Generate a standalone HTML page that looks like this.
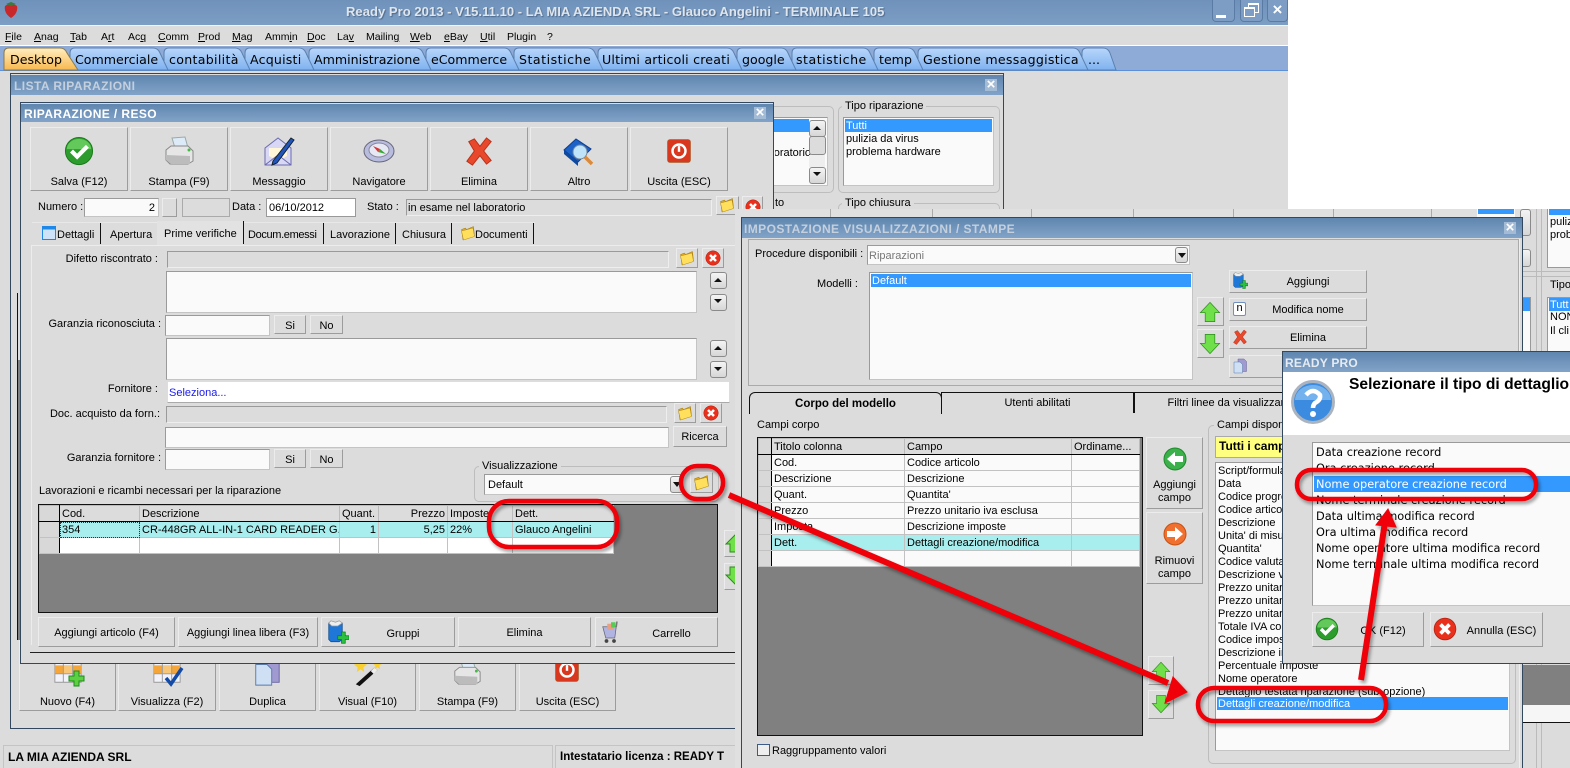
<!DOCTYPE html>
<html><head><meta charset="utf-8"><title>Ready Pro</title>
<style>
html,body{margin:0;padding:0;background:#fff}
body{width:1570px;height:768px;overflow:hidden;position:relative;font:11px/16px "Liberation Sans",sans-serif;color:#000}
div{position:absolute;box-sizing:border-box;white-space:nowrap}
svg{position:absolute;overflow:visible}
.tb{background:linear-gradient(#5f86af,#82a3c8)}
.btn{background:#dcdcdc;border:1px solid;border-color:#ececec #9c9c9c #9c9c9c #ececec;text-align:center}
.big .l{left:0;right:0;bottom:0;text-align:center}
.in{background:#fafafa;border:1px solid #9a9a9a;border-bottom-color:#c4c4c4;border-right-color:#c4c4c4;padding:1px 3px}
.ro{background:#dcdcdc;border:1px solid #9a9a9a;border-bottom-color:#eee;border-right-color:#eee;padding:0 3px}
.v{font-family:"DejaVu Sans",sans-serif}
.sel{background:#3399ff;color:#fff;line-height:15px}
.gb{border:1px solid #bdbdbd;border-radius:5px}
.cap{background:#dcdcdc;padding:0 3px}
.r{text-align:right}
.x{width:12px;height:12px;background:#a4bbd6;color:#fff;font:bold 15px/11px 'Liberation Sans',sans-serif;text-align:center}
.tl{top:52px;font-size:12.6px}
.wb{top:0;height:22px;border:1px solid #5a7ca4;border-top:none;border-radius:0 0 4px 4px;background:#7d9dc4}
table{position:absolute;border-collapse:collapse;table-layout:fixed;background:#fff;font:11px/14px "Liberation Sans",sans-serif}
td,th{border:1px solid #c2c2c2;height:16px;padding:0 2px;font-weight:normal;text-align:left;overflow:hidden;white-space:nowrap;box-sizing:border-box}
th{background:#dcdcdc;border-color:#bbb;border-bottom:1px solid #000}
td.h,th.h{background:#d8d8d8;border-right:1px solid #000}
.cy td{background:#a8eeee}
.cy td.h{background:#d8d8d8}
.s{width:17px;background:linear-gradient(#f4f4f4,#d6d6d6);border:1px solid #8a8a8a;border-radius:3px}
.lst div{line-height:15px;height:13px}
</style></head>
<body>
<svg width="0" height="0" style="position:absolute">
<defs>
<symbol id="ok" viewBox="0 0 32 32"><circle cx="16" cy="16" r="14.5" fill="#2c9c2c" stroke="#1a7a1a"/><path d="M3 14a13 11 0 0 1 26 0z" fill="#63c95a"/><path d="M8 16l6 6 11-11" fill="none" stroke="#fff" stroke-width="4.5"/></symbol>
<symbol id="no" viewBox="0 0 32 32"><circle cx="16" cy="16" r="14.5" fill="#e8301c" stroke="#b02010"/><path d="M10 10l12 12M22 10L10 22" stroke="#fff" stroke-width="5"/></symbol>
<symbol id="x" viewBox="0 0 32 32"><path d="M5 6l6-3 6 8 7-9 5 4-8 10 8 10-5 4-7-9-8 10-6-4 8-11z" fill="#e8482c" stroke="#b93018"/></symbol>
<symbol id="prn" viewBox="0 0 32 32"><path d="M9 3l13-1 3 11H12z" fill="#dcebf7" stroke="#9aa"/><path d="M3 15l5-4h17l5 5v10l-5 3H7l-4-4z" fill="#e6e6e6" stroke="#888"/><path d="M3 20l24 1v8H8l-5-4z" fill="#bcbcbc"/><circle cx="26" cy="15" r="1.5" fill="#4b4"/></symbol>
<symbol id="mail" viewBox="0 0 32 32"><path d="M2 13L15 3l13 10v17H2z" fill="#d8d8f4" stroke="#6a6ab0"/><path d="M6 13h18v8l-9 5-9-5z" fill="#fff7d8"/><path d="M2 30l13-10 13 10" fill="none" stroke="#6a6ab0"/><path d="M10 26L28 3l3 2-17 23-5 2z" fill="#2255bb" stroke="#123"/></symbol>
<symbol id="cmp" viewBox="0 0 32 32"><ellipse cx="16" cy="16" rx="15" ry="11" fill="#b8bde0" stroke="#667"/><ellipse cx="16" cy="15" rx="10" ry="7" fill="#e6e8f4" stroke="#889"/><path d="M10 11l7 3-2 3z" fill="#d33"/><path d="M23 19l-8-2 2-3z" fill="#3a3"/></symbol>
<symbol id="bk" viewBox="0 0 32 32"><path d="M1 13L13 2l15 10-13 13z" fill="#1c62c8" stroke="#0d3e90"/><path d="M1 13v4l14 12v-4z" fill="#0d4aa0"/><circle cx="17" cy="15" r="7" fill="#bfe3f8" stroke="#789"/><path d="M22 20l7 7" stroke="#d98a3a" stroke-width="3.5"/></symbol>
<symbol id="pw" viewBox="0 0 32 32"><rect x="2" y="2" width="28" height="28" rx="3" fill="#d9381e" stroke="#a52"/><circle cx="16" cy="16" r="8" fill="none" stroke="#fff" stroke-width="3"/><path d="M16 10v7" stroke="#fff" stroke-width="3"/></symbol>
<symbol id="fo" viewBox="0 0 32 32"><path d="M3 9l8-3 2 3 14-6 2 19-23 8z" fill="#e0a820" stroke="#a17a10"/><path d="M3 12l23-6 3 17-22 7z" fill="#ffdf5c" stroke="#b08a18"/></symbol>
<symbol id="up" viewBox="0 0 32 32"><path d="M16 2L30 17h-7v13H9V17H2z" fill="#6fe04a" stroke="#2c8a1c"/></symbol>
<symbol id="dn" viewBox="0 0 32 32"><path d="M16 30L30 15h-7V2H9v13H2z" fill="#6fe04a" stroke="#2c8a1c"/></symbol>
<symbol id="q" viewBox="0 0 44 44"><circle cx="22" cy="22" r="20.5" fill="#3b8ce0" stroke="#aab4c0" stroke-width="3"/><path d="M4 20a18 15 0 0 1 36 0z" fill="#74b2ee"/><path d="M15 15q7-8 14 0 1 5-5 8-2 2-2 5" fill="none" stroke="#fff" stroke-width="4.5"/><circle cx="22" cy="34" r="3" fill="#fff"/></symbol>
<symbol id="grp" viewBox="0 0 32 32"><path d="M5 4h18v22l-4 3H8l-3-3z" fill="#1f78d8" stroke="#0a4a90"/><path d="M5 4l3-3 6 2 5-2 4 3-6 4H9z" fill="#eee" stroke="#999"/><path d="M17 21h5v-5h5v5h5v5h-5v5h-5v-5h-5z" fill="#2cc040" stroke="#0a7a20"/></symbol>
<symbol id="crt" viewBox="0 0 32 32"><path d="M5 9h18l-2 15H9z" fill="#b0b4e0" stroke="#667"/><path d="M11 5h9v8h-9z" fill="#e8a080"/><path d="M16 3h6v7h-6z" fill="#5c5"/><path d="M24 2l-1 7" stroke="#777" stroke-width="2"/><circle cx="10" cy="28" r="2.5" fill="#444"/><circle cx="20" cy="28" r="2.5" fill="#444"/></symbol>
<symbol id="tg" viewBox="0 0 32 32"><path d="M2 4h28v24H2z" fill="#f2f2fa" stroke="#999"/><path d="M2 10h28v9H2z" fill="#f4a63a"/><path d="M11 10h10v9H11z" fill="#f8c678"/><path d="M11 4v24M21 4v24M2 19h28" stroke="#999"/></symbol>
<symbol id="doc" viewBox="0 0 32 32"><path d="M12 2h12l5 5v20H12z" fill="#a09ad0" stroke="#64649c"/><path d="M4 8h12l5 5v17H4z" fill="#cfe0f4" stroke="#5a7aa8"/></symbol>
<symbol id="wand" viewBox="0 0 32 32"><path d="M3 29L23 11l3 3L7 31z" fill="#111"/><path d="M19 15l4-4 3 3-4 4z" fill="#eee"/><path d="M8 2l2 5 5 1-4 3 1 5-4-3-4 3 1-5-4-3 5-1z" fill="#f8d030"/><path d="M26 2l1 4 4 1-3 2 1 4-3-2-3 2 1-4-3-2 4-1z" fill="#f8d030"/></symbol>
</defs></svg>

<!-- main app -->
<div style="left:0;top:0;width:1288px;height:768px;background:#dcdcdc"></div>
<div style="left:0;top:0;width:1288px;height:25px;background:linear-gradient(#6f92ba,#7c9ec5)"></div>
<svg style="left:3px;top:1px" width="16" height="18" viewBox="0 0 16 18"><path d="M8 17C3 14 1 9 2 5q6-4 12 0c1 4-1 9-6 12z" fill="#c8282c"/><path d="M3 3l5-2 5 2-5 2z" fill="#3c7a3c"/></svg>
<div style="left:346px;top:4px;font-weight:bold;font-size:13px;color:#dfe5ec;letter-spacing:.045px;text-shadow:1px 1px 1px #4f6b8c">Ready Pro 2013 - V15.11.10 - LA MIA AZIENDA SRL - Glauco Angelini - TERMINALE 105</div>
<div class="wb" style="left:1212px;width:23px"><div style="left:3px;top:15px;width:10px;height:3px;background:#fff"></div></div>
<div class="wb" style="left:1240px;width:23px"><div style="left:7px;top:3px;width:11px;height:10px;border:1px solid #fff;border-top-width:2px"></div><div style="left:3px;top:7px;width:11px;height:10px;border:1px solid #fff;border-top-width:2px;background:#7d9dc4"></div></div>
<div class="wb" style="left:1267px;width:21px;color:#fff;text-align:center;font:bold 17px/20px 'Liberation Sans',sans-serif">×</div>

<!-- menu -->
<div style="left:0;top:25px;width:1288px;height:21px;background:#dcdcdc;border-top:1px solid #f4f4f4"></div>
<div style="left:5px;top:29px;font-size:10.5px"><u>F</u>ile</div>
<div style="left:34px;top:29px;font-size:10.5px"><u>A</u>nag</div>
<div style="left:70px;top:29px;font-size:10.5px"><u>T</u>ab</div>
<div style="left:101px;top:29px;font-size:10.5px">A<u>r</u>t</div>
<div style="left:128px;top:29px;font-size:10.5px">Ac<u>q</u></div>
<div style="left:158px;top:29px;font-size:10.5px"><u>C</u>omm</div>
<div style="left:198px;top:29px;font-size:10.5px"><u>P</u>rod</div>
<div style="left:232px;top:29px;font-size:10.5px"><u>M</u>ag</div>
<div style="left:265px;top:29px;font-size:10.5px">Amm<u>i</u>n</div>
<div style="left:307px;top:29px;font-size:10.5px"><u>D</u>oc</div>
<div style="left:337px;top:29px;font-size:10.5px">La<u>v</u></div>
<div style="left:366px;top:29px;font-size:10.5px">Mailin<u>g</u></div>
<div style="left:410px;top:29px;font-size:10.5px"><u>W</u>eb</div>
<div style="left:444px;top:29px;font-size:10.5px"><u>e</u>Bay</div>
<div style="left:480px;top:29px;font-size:10.5px"><u>U</u>til</div>
<div style="left:507px;top:29px;font-size:10.5px">Plugin</div>
<div style="left:547px;top:29px;font-size:10.5px">?</div>

<!-- tabs -->
<div style="left:0;top:45px;width:1288px;height:26px;background:#8dabd6;border-top:1px solid #fff;border-bottom:1px solid #5b8fd8"></div>
<svg style="left:0;top:0" width="1288" height="72">
<defs><linearGradient id="tbb" x1="0" y1="0" x2="0" y2="1"><stop offset="0" stop-color="#b8d6fa"/><stop offset="1" stop-color="#7fb2f0"/></linearGradient>
<linearGradient id="tbo" x1="0" y1="0" x2="0" y2="1"><stop offset="0" stop-color="#ffeec0"/><stop offset="1" stop-color="#f8b850"/></linearGradient></defs>
<g fill="url(#tbb)" stroke="#5c80ae">
<path d="M1082 70V53q0-5 5-5h16q5 0 7 5l6 17z"/>
<path d="M918 70V53q0-5 5-5h150q5 0 7 5l8 17z"/>
<path d="M874 70V53q0-5 5-5h29q5 0 7 5l8 17z"/>
<path d="M792 70V53q0-5 5-5h66q5 0 7 5l8 17z"/>
<path d="M737 70V53q0-5 5-5h39q5 0 7 5l8 17z"/>
<path d="M598 70V53q0-5 5-5h124q5 0 7 5l8 17z"/>
<path d="M514 70V53q0-5 5-5h69q5 0 7 5l8 17z"/>
<path d="M426 70V53q0-5 5-5h73q5 0 7 5l8 17z"/>
<path d="M309 70V53q0-5 5-5h102q5 0 7 5l8 17z"/>
<path d="M245 70V53q0-5 5-5h49q5 0 7 5l8 17z"/>
<path d="M164 70V53q0-5 5-5h66q5 0 7 5l8 17z"/>
<path d="M70 70V53q0-5 5-5h78q5 0 7 5l8 17z"/>
</g>
<path d="M4 70V53q0-5 5-5h51q5 0 7 5l11 17z" fill="url(#tbo)" stroke="#8a7a50"/>
</svg>
<div class="v tl" style="left:10px">Desktop</div>
<div class="v tl" style="left:75px">Commerciale</div>
<div class="v tl" style="left:169px;letter-spacing:.3px">contabilità</div>
<div class="v tl" style="left:250px;letter-spacing:.2px">Acquisti</div>
<div class="v tl" style="left:314px">Amministrazione</div>
<div class="v tl" style="left:431px">eCommerce</div>
<div class="v tl" style="left:519px;letter-spacing:.5px">Statistiche</div>
<div class="v tl" style="left:602px;letter-spacing:.2px">Ultimi articoli creati</div>
<div class="v tl" style="left:742px">google</div>
<div class="v tl" style="left:796px;letter-spacing:.5px">statistiche</div>
<div class="v tl" style="left:879px">temp</div>
<div class="v tl" style="left:923px;letter-spacing:.27px">Gestione messaggistica</div>
<div class="v tl" style="left:1088px">...</div>

<!-- LISTA window -->
<div style="left:10px;top:73px;width:994px;height:656px;background:#dcdcdc;border:1px solid #33475f"></div>
<div class="tb" style="left:11px;top:75px;width:992px;height:20px"></div>
<div style="left:14px;top:78px;font-weight:bold;font-size:12px;color:#c4d0de;letter-spacing:.45px">LISTA RIPARAZIONI</div>
<div class="x" style="left:985px;top:79px">×</div>
<div style="left:17px;top:293px;width:4px;height:347px;border-left:1px solid #111;background:linear-gradient(#dcdcdc 67px,#808080 67px)"></div>

<!-- lista groups -->
<div class="gb" style="left:770px;top:106px;width:64px;height:87px"></div>
<div class="in" style="left:770px;top:117px;width:58px;height:69px"></div>
<div class="sel" style="left:770px;top:119px;width:39px;height:13px"></div>
<div style="left:775px;top:145px;width:36px;overflow:hidden;height:16px;direction:rtl">oratorio</div>
<div class="s" style="left:809px;top:120px;height:17px"></div>
<div class="s" style="left:809px;top:136px;height:19px;background:#dcdcdc"></div>
<div style="left:809px;top:155px;width:16px;height:12px;background:#eee"></div>
<div class="s" style="left:809px;top:167px;height:17px"></div>
<svg style="left:813px;top:125px" width="8" height="55"><path d="M0 5l4-4 4 4zM0 47l4 4 4-4z" fill="#111"/></svg>
<div class="gb" style="left:838px;top:106px;width:162px;height:87px"></div>
<div class="cap" style="left:842px;top:98px">Tipo riparazione</div>
<div class="in" style="left:843px;top:117px;width:151px;height:69px"></div>
<div class="sel" style="left:845px;top:119px;width:147px;height:13px;padding-left:1px">Tutti</div>
<div style="left:846px;top:131px">pulizia da virus</div>
<div style="left:846px;top:144px">problema hardware</div>
<div style="left:775px;top:195px">to</div>
<div class="gb" style="left:838px;top:203px;width:162px;height:30px"></div>
<div class="cap" style="left:842px;top:195px">Tipo chiusura</div>

<!-- lista toolbar -->
<div class="btn big" style="left:19px;top:640px;width:97px;height:71px"><div class="l">Nuovo (F4)</div></div>
<div class="btn big" style="left:118px;top:640px;width:98px;height:71px"><div class="l">Visualizza (F2)</div></div>
<div class="btn big" style="left:219px;top:640px;width:97px;height:71px"><div class="l">Duplica</div></div>
<div class="btn big" style="left:319px;top:640px;width:97px;height:71px"><div class="l">Visual (F10)</div></div>
<div class="btn big" style="left:419px;top:640px;width:97px;height:71px"><div class="l">Stampa (F9)</div></div>
<div class="btn big" style="left:519px;top:640px;width:97px;height:71px"><div class="l">Uscita (ESC)</div></div>
<svg width="30" height="30" style="left:53px;top:656px"><use href="#tg"/><path d="M16 20h5v-5h5v5h5v5h-5v5h-5v-5h-5z" fill="#5cd040" stroke="#1e8a20"/></svg>
<svg width="30" height="30" style="left:152px;top:656px"><use href="#tg"/><path d="M14 22l5 6 11-16" fill="none" stroke="#124aa8" stroke-width="3.5"/></svg>
<svg width="30" height="30" style="left:252px;top:657px"><use href="#doc"/></svg>
<svg width="30" height="30" style="left:353px;top:657px"><use href="#wand"/></svg>
<svg width="30" height="30" style="left:452px;top:657px"><use href="#prn"/></svg>
<svg width="26" height="26" style="left:554px;top:657px"><use href="#pw"/></svg>

<!-- RIPARAZIONE window -->
<div style="left:20px;top:102px;width:754px;height:562px;background:#dcdcdc;border:1px solid #33475f"></div>
<div class="tb" style="left:21px;top:104px;width:752px;height:18px"></div>
<div style="left:24px;top:106px;font-weight:bold;font-size:12px;color:#fff;letter-spacing:.4px">RIPARAZIONE / RESO</div>
<div class="x" style="left:754px;top:107px">×</div>

<div class="btn big" style="left:30px;top:127px;width:98px;height:64px"><div class="l">Salva (F12)</div></div>
<div class="btn big" style="left:130px;top:127px;width:98px;height:64px"><div class="l">Stampa (F9)</div></div>
<div class="btn big" style="left:230px;top:127px;width:98px;height:64px"><div class="l">Messaggio</div></div>
<div class="btn big" style="left:330px;top:127px;width:98px;height:64px"><div class="l">Navigatore</div></div>
<div class="btn big" style="left:430px;top:127px;width:98px;height:64px"><div class="l">Elimina</div></div>
<div class="btn big" style="left:530px;top:127px;width:98px;height:64px"><div class="l">Altro</div></div>
<div class="btn big" style="left:630px;top:127px;width:98px;height:64px"><div class="l">Uscita (ESC)</div></div>
<svg width="30" height="30" style="left:64px;top:136px"><use href="#ok"/></svg>
<svg width="32" height="32" style="left:163px;top:135px"><use href="#prn"/></svg>
<svg width="32" height="32" style="left:263px;top:135px"><use href="#mail"/></svg>
<svg width="32" height="32" style="left:363px;top:135px"><use href="#cmp"/></svg>
<svg width="30" height="30" style="left:464px;top:136px"><use href="#x"/></svg>
<svg width="32" height="32" style="left:563px;top:137px"><use href="#bk"/></svg>
<svg width="26" height="26" style="left:666px;top:138px"><use href="#pw"/></svg>

<div style="left:38px;top:199px">Numero :</div>
<div class="in r" style="left:84px;top:198px;width:75px;height:19px">2</div>
<div class="btn" style="left:162px;top:198px;width:15px;height:19px"></div>
<div class="ro" style="left:182px;top:198px;width:48px;height:19px;border-color:#aaa"></div>
<div style="left:232px;top:199px">Data :</div>
<div style="left:266px;top:198px;width:90px;height:19px;background:#fff;border:1px solid #999;padding:1px 2px">06/10/2012</div>
<div style="left:367px;top:199px">Stato :</div>
<div class="ro" style="left:406px;top:199px;width:306px;height:17px;padding:0 1px">in esame nel laboratorio</div>
<div class="btn" style="left:716px;top:196px;width:23px;height:19px"></div>
<svg width="16" height="16" style="left:719px;top:197px"><use href="#fo"/></svg>
<div class="btn" style="left:742px;top:196px;width:21px;height:14px"></div>
<svg width="16" height="16" style="left:745px;top:199px"><use href="#no"/></svg>

<!-- tabs inner -->
<div style="left:32px;top:222px;width:503px;height:23px;background:#dcdcdc;border-top:1px solid #e8e8e8"></div>
<svg width="14" height="14" style="left:42px;top:226px"><rect x=".5" y=".5" width="13" height="13" fill="#cfe3f8" stroke="#1e88e8"/><rect x=".5" y=".5" width="13" height="3" fill="#1e88e8"/></svg>
<div style="left:57px;top:227px">Dettagli</div>
<div style="left:110px;top:227px">Apertura</div>
<div style="left:157px;top:221px;width:87px;height:25px;background:#e2e2e2"></div>
<div style="left:164px;top:226px">Prime verifiche</div>
<div style="left:248px;top:227px;letter-spacing:-.35px">Docum.emessi</div>
<div style="left:330px;top:227px">Lavorazione</div>
<div style="left:402px;top:227px">Chiusura</div>
<svg width="16" height="16" style="left:460px;top:225px"><use href="#fo"/></svg>
<div style="left:475px;top:227px">Documenti</div>
<div style="left:100px;top:223px;width:1px;height:21px;background:#111"></div>
<div style="left:243px;top:221px;width:1px;height:23px;background:#111"></div>
<div style="left:323px;top:223px;width:1px;height:21px;background:#111"></div>
<div style="left:395px;top:223px;width:1px;height:21px;background:#111"></div>
<div style="left:451px;top:223px;width:1px;height:21px;background:#111"></div>
<div style="left:533px;top:223px;width:1px;height:21px;background:#111"></div>
<div style="left:31px;top:245px;width:704px;height:1px;background:#ececec"></div>
<div style="left:31px;top:245px;width:1px;height:400px;background:#ececec"></div>

<div class="r" style="left:40px;top:251px;width:118px">Difetto riscontrato :</div>
<div class="ro" style="left:167px;top:251px;width:502px;height:17px"></div>
<div class="btn" style="left:676px;top:248px;width:22px;height:20px"></div>
<svg width="16" height="16" style="left:679px;top:250px"><use href="#fo"/></svg>
<div class="btn" style="left:702px;top:248px;width:22px;height:20px"></div>
<svg width="16" height="16" style="left:705px;top:250px"><use href="#no"/></svg>
<div class="in" style="left:166px;top:271px;width:531px;height:42px"></div>
<div class="s" style="left:710px;top:272px;height:17px"></div><div class="s" style="left:710px;top:294px;height:17px"></div>
<svg style="left:714px;top:277px" width="8" height="30"><path d="M0 5l4-4 4 4zM0 22l4 4 4-4z" fill="#111"/></svg>
<div class="r" style="left:30px;top:316px;width:131px">Garanzia riconosciuta :</div>
<div class="in" style="left:165px;top:315px;width:105px;height:21px"></div>
<div class="btn" style="left:274px;top:315px;width:32px;height:19px;padding-top:2px">Si</div>
<div class="btn" style="left:310px;top:315px;width:33px;height:19px;padding-top:2px">No</div>
<div class="in" style="left:166px;top:338px;width:531px;height:42px"></div>
<div class="s" style="left:710px;top:340px;height:17px"></div><div class="s" style="left:710px;top:361px;height:17px"></div>
<svg style="left:714px;top:345px" width="8" height="30"><path d="M0 5l4-4 4 4zM0 22l4 4 4-4z" fill="#111"/></svg>
<div class="r" style="left:60px;top:381px;width:98px">Fornitore :</div>
<div style="left:167px;top:381px;width:563px;height:22px;background:#fff;border:1px solid #ddd;border-bottom-color:#aaa;padding:3px 1px;color:#1a1aee">Seleziona...</div>
<div class="r" style="left:30px;top:406px;width:130px">Doc. acquisto da forn.:</div>
<div class="ro" style="left:166px;top:406px;width:501px;height:17px"></div>
<div class="btn" style="left:674px;top:403px;width:22px;height:20px"></div>
<svg width="16" height="16" style="left:677px;top:405px"><use href="#fo"/></svg>
<div class="btn" style="left:700px;top:403px;width:22px;height:20px"></div>
<svg width="16" height="16" style="left:703px;top:405px"><use href="#no"/></svg>
<div class="in" style="left:165px;top:427px;width:504px;height:21px"></div>
<div class="btn" style="left:673px;top:426px;width:54px;height:21px;padding-top:2px">Ricerca</div>
<div class="r" style="left:40px;top:450px;width:121px">Garanzia fornitore :</div>
<div class="in" style="left:165px;top:449px;width:105px;height:21px"></div>
<div class="btn" style="left:274px;top:449px;width:32px;height:19px;padding-top:2px">Si</div>
<div class="btn" style="left:310px;top:449px;width:33px;height:19px;padding-top:2px">No</div>
<div style="left:39px;top:483px">Lavorazioni e ricambi necessari per la riparazione</div>

<div class="gb" style="left:474px;top:466px;width:245px;height:36px"></div>
<div class="cap" style="left:479px;top:458px;padding:0 3px">Visualizzazione</div>
<div class="in" style="left:484px;top:474px;width:199px;height:21px;padding:2px 3px">Default</div>
<div class="s" style="left:670px;top:476px;width:13px;height:17px"></div>
<svg style="left:673px;top:482px" width="8" height="6"><path d="M0 0h8L4 5z" fill="#111"/></svg>
<div class="btn" style="left:690px;top:472px;width:23px;height:21px"></div>
<svg width="17" height="17" style="left:693px;top:474px"><use href="#fo"/></svg>

<!-- grid -->
<div style="left:38px;top:504px;width:680px;height:109px;background:#808080;border:1px solid #111"></div>
<table style="left:39px;top:505px;width:574px;border-right:1px solid #000;border-bottom:1px solid #000">
<colgroup><col style="width:20px"><col style="width:80px"><col style="width:200px"><col style="width:39px"><col style="width:69px"><col style="width:65px"><col style="width:101px"></colgroup>
<tr><th class="h"></th><th>Cod.</th><th>Descrizione</th><th>Quant.</th><th style="text-align:right">Prezzo</th><th>Imposte</th><th>Dett.</th></tr>
<tr class="cy"><td class="h"></td><td style="outline:1px dotted #333;outline-offset:-1px">354</td><td>CR-448GR ALL-IN-1 CARD READER G...</td><td style="text-align:right">1</td><td style="text-align:right">5,25</td><td>22%</td><td>Glauco Angelini</td></tr>
<tr><td class="h"></td><td></td><td></td><td></td><td></td><td></td><td></td></tr>
</table>

<div class="btn" style="left:724px;top:530px;width:12px;height:27px"></div>
<div class="btn" style="left:724px;top:563px;width:12px;height:27px"></div>
<svg width="20" height="20" style="left:725px;top:533px"><path d="M11 1L1 11h4v8h6z" fill="#6fe04a" stroke="#2c8a1c"/></svg>
<svg width="20" height="20" style="left:725px;top:566px"><path d="M11 19L1 9h4V1h6z" fill="#6fe04a" stroke="#2c8a1c"/></svg>

<div class="btn" style="left:38px;top:617px;width:137px;height:30px;padding-top:7px">Aggiungi articolo (F4)</div>
<div class="btn" style="left:178px;top:617px;width:140px;height:30px;padding-top:7px">Aggiungi linea libera (F3)</div>
<div class="btn" style="left:321px;top:617px;width:134px;height:30px;padding:8px 0 0 30px">Gruppi</div>
<svg width="24" height="26" style="left:325px;top:619px"><use href="#grp"/></svg>
<div class="btn" style="left:458px;top:617px;width:133px;height:30px;padding-top:7px">Elimina</div>
<div class="btn" style="left:595px;top:617px;width:123px;height:30px;padding:8px 0 0 30px">Carrello</div>
<svg width="24" height="26" style="left:599px;top:619px"><use href="#crt"/></svg>
<div style="left:30px;top:652px;width:710px;height:1px;background:#222"></div>
<div style="left:10px;top:728px;width:735px;height:1px;background:#33475f"></div>

<!-- status -->
<div style="left:0;top:735px;width:1288px;height:33px;background:#dcdcdc"></div>
<div style="left:3px;top:745px;width:550px;height:23px;border:1px solid #c4c4c4;border-bottom:none;padding:3px 4px;font-weight:bold;font-size:12px">LA MIA AZIENDA SRL</div>
<div style="left:555px;top:745px;width:190px;height:23px;border:1px solid #c4c4c4;border-bottom:none;padding:3px 4px;font-weight:bold;font-size:11.5px;overflow:hidden">Intestatario licenza : READY T</div>

<!-- pasted second shot -->
<div style="left:735px;top:209px;width:835px;height:559px;background:#e0e0e0"></div>
<div style="left:830px;top:209px;width:1px;height:9px;background:#aaa"></div>
<div style="left:932px;top:209px;width:1px;height:9px;background:#aaa"></div>
<div style="left:1031px;top:209px;width:1px;height:9px;background:#aaa"></div>
<div style="left:1133px;top:209px;width:1px;height:9px;background:#aaa"></div>
<div style="left:1233px;top:209px;width:1px;height:9px;background:#aaa"></div>
<div style="left:1333px;top:209px;width:1px;height:9px;background:#aaa"></div>
<div style="left:1431px;top:209px;width:1px;height:9px;background:#aaa"></div>
<div style="left:1477px;top:209px;width:38px;height:9px;background:#fafafa"></div>
<div style="left:1478px;top:209px;width:36px;height:5px;background:#3399ff"></div>

<!-- right back panel -->
<div style="left:1522px;top:209px;width:48px;height:559px;background:#dcdcdc"></div>
<div style="left:1536px;top:209px;width:1px;height:559px;background:#bbb"></div>
<div style="left:1541px;top:209px;width:1px;height:559px;background:#bbb"></div>
<div style="left:1523px;top:271px;width:47px;height:1px;background:#bbb"></div>
<div style="left:1523px;top:276px;width:47px;height:1px;background:#bbb"></div>
<div class="s" style="left:1520px;top:209px;width:11px;height:27px"></div>
<div class="s" style="left:1520px;top:249px;width:11px;height:18px"></div>
<div style="left:1523px;top:297px;width:8px;height:54px;background:#fafafa;border-right:1px solid #999;border-top:1px solid #999"></div>
<div style="left:1523px;top:298px;width:7px;height:13px;background:#3399ff"></div>
<div style="left:1547px;top:209px;width:23px;height:59px;background:#fafafa;border-left:1px solid #999;border-bottom:1px solid #999"></div>
<div style="left:1549px;top:209px;width:21px;height:6px;background:#3399ff"></div>
<div style="left:1550px;top:214px">puliz</div>
<div style="left:1550px;top:227px">prob</div>
<div class="cap" style="left:1547px;top:277px">Tipo</div>
<div style="left:1547px;top:297px;width:23px;height:54px;background:#fafafa;border-left:1px solid #999;border-top:1px solid #999"></div>
<div class="sel" style="left:1549px;top:298px;width:21px;height:13px;padding-left:1px">Tutt</div>
<div style="left:1550px;top:309px">NON</div>
<div style="left:1550px;top:323px">Il cli</div>
<div style="left:1523px;top:665px;width:47px;height:40px;background:#808080"></div>
<div style="left:1523px;top:705px;width:47px;height:17px;background:#f6f6f6"></div>
<div style="left:1523px;top:722px;width:47px;height:1px;background:#111"></div>

<!-- IMPOSTAZIONE window -->
<div style="left:741px;top:217px;width:782px;height:551px;background:#dcdcdc;border:1px solid #33475f;border-bottom:none"></div>
<div class="tb" style="left:742px;top:218px;width:780px;height:20px"></div>
<div style="left:744px;top:221px;font-weight:bold;font-size:12px;color:#c4d0de;letter-spacing:.42px">IMPOSTAZIONE VISUALIZZAZIONI / STAMPE</div>
<div class="x" style="left:1504px;top:222px">×</div>
<div style="left:748px;top:239px;width:771px;height:147px;border:1px solid #aaa;border-color:#aaa #aaa #aaa #aaa"></div>
<div style="left:1519px;top:239px;width:1px;height:529px;background:#eee"></div>

<div style="left:755px;top:246px">Procedure disponibili :</div>
<div class="in" style="left:867px;top:245px;width:323px;height:20px;color:#777;padding:2px 1px">Riparazioni</div>
<div class="s" style="left:1175px;top:247px;width:13px;height:16px"></div>
<svg style="left:1178px;top:253px" width="8" height="6"><path d="M0 0h8L4 5z" fill="#111"/></svg>
<div class="r" style="left:800px;top:276px;width:58px">Modelli :</div>
<div class="in" style="left:869px;top:272px;width:324px;height:108px"></div>
<div class="sel" style="left:871px;top:274px;width:320px;height:13px;padding-left:1px">Default</div>
<div class="btn" style="left:1229px;top:270px;width:138px;height:23px;padding:3px 0 0 20px">Aggiungi</div>
<svg width="17" height="17" style="left:1231px;top:272px"><use href="#grp"/></svg>
<div class="btn" style="left:1229px;top:298px;width:138px;height:23px;padding:3px 0 0 20px">Modifica nome</div>
<div style="left:1233px;top:302px;width:13px;height:14px;background:#fff;border:1px solid #7090c0;border-radius:2px;line-height:10px;text-align:center;font-size:11px">n</div>
<div class="btn" style="left:1229px;top:326px;width:138px;height:23px;padding:3px 0 0 20px">Elimina</div>
<svg width="16" height="16" style="left:1232px;top:329px"><use href="#x"/></svg>
<div class="btn" style="left:1229px;top:355px;width:138px;height:23px"></div>
<svg width="16" height="16" style="left:1232px;top:358px"><use href="#doc"/></svg>
<div class="btn" style="left:1197px;top:297px;width:27px;height:29px"></div>
<svg width="22" height="24" style="left:1199px;top:300px"><use href="#up"/></svg>
<div class="btn" style="left:1197px;top:329px;width:27px;height:29px"></div>
<svg width="22" height="24" style="left:1199px;top:332px"><use href="#dn"/></svg>

<!-- Tabs imp -->
<div style="left:750px;top:412px;width:768px;height:1px;background:#111"></div>
<div style="left:941px;top:392px;width:193px;height:21px;border:1px solid #111;border-bottom:none;background:#dcdcdc;text-align:center;padding-top:2px">Utenti abilitati</div>
<div style="left:1134px;top:392px;width:190px;height:21px;border:1px solid #111;border-bottom:none;background:#dcdcdc;text-align:center;padding-top:2px">Filtri linee da visualizzare</div>
<div style="left:749px;top:392px;width:193px;height:22px;border:1px solid #111;border-bottom:none;border-radius:6px 6px 0 0;background:#dcdcdc;text-align:center;padding-top:3px;font-weight:bold;font-size:11.5px">Corpo del modello</div>
<div style="left:757px;top:417px">Campi corpo</div>

<div style="left:757px;top:437px;width:386px;height:299px;background:#808080;border:1px solid #111"></div>
<table style="left:758px;top:438px;width:381px;border-right:1px solid #000;border-bottom:1px solid #000;background:#fafafa">
<colgroup><col style="width:13px"><col style="width:133px"><col style="width:167px"><col style="width:68px"></colgroup>
<tr><th class="h"></th><th>Titolo colonna</th><th>Campo</th><th>Ordiname...</th></tr>
<tr><td class="h"></td><td>Cod.</td><td>Codice articolo</td><td></td></tr>
<tr><td class="h"></td><td>Descrizione</td><td>Descrizione</td><td></td></tr>
<tr><td class="h"></td><td>Quant.</td><td>Quantita'</td><td></td></tr>
<tr><td class="h"></td><td>Prezzo</td><td>Prezzo unitario iva esclusa</td><td></td></tr>
<tr><td class="h"></td><td>Imposta</td><td>Descrizione imposte</td><td></td></tr>
<tr class="cy"><td class="h"></td><td>Dett.</td><td>Dettagli creazione/modifica</td><td></td></tr>
<tr><td class="h"></td><td></td><td></td><td></td></tr>
</table>

<div class="btn" style="left:1146px;top:437px;width:57px;height:72px;padding-top:41px;line-height:13px">Aggiungi<br>campo</div>
<svg width="24" height="24" style="left:1163px;top:447px"><circle cx="12" cy="12" r="11" fill="#3cb04a" stroke="#1e8a2c"/><path d="M4 12l8-7v4h8v6h-8v4z" fill="#fff"/></svg>
<div class="btn" style="left:1146px;top:512px;width:57px;height:72px;padding-top:42px;line-height:13px">Rimuovi<br>campo</div>
<svg width="24" height="24" style="left:1163px;top:522px"><circle cx="12" cy="12" r="11" fill="#f07030" stroke="#c85010"/><path d="M20 12l-8-7v4H4v6h8v4z" fill="#fff"/></svg>
<div class="btn" style="left:1148px;top:656px;width:26px;height:29px"></div>
<svg width="20" height="22" style="left:1151px;top:660px"><use href="#up"/></svg>
<div class="btn" style="left:1148px;top:690px;width:26px;height:29px"></div>
<svg width="20" height="22" style="left:1151px;top:693px"><use href="#dn"/></svg>
<div style="left:757px;top:744px;width:13px;height:12px;background:#eee;border:1px solid #3c5a8a"></div>
<div style="left:772px;top:743px">Raggruppamento valori</div>

<div class="gb" style="left:1208px;top:425px;width:308px;height:339px"></div>
<div class="cap" style="left:1214px;top:417px">Campi disponibili</div>
<div style="left:1215px;top:436px;width:293px;height:22px;background:#ffff80;border:1px solid #aaa;font-weight:bold;padding:1px 3px;font-size:12px">Tutti i campi</div>
<div class="in" style="left:1215px;top:462px;width:295px;height:289px"></div>
<div class="lst">
<div style="left:1218px;top:464px">Script/formula</div>
<div style="left:1218px;top:477px">Data</div>
<div style="left:1218px;top:490px">Codice progressivo</div>
<div style="left:1218px;top:503px">Codice articolo</div>
<div style="left:1218px;top:516px">Descrizione</div>
<div style="left:1218px;top:529px">Unita' di misura</div>
<div style="left:1218px;top:542px">Quantita'</div>
<div style="left:1218px;top:555px">Codice valuta</div>
<div style="left:1218px;top:568px">Descrizione valuta</div>
<div style="left:1218px;top:581px">Prezzo unitario</div>
<div style="left:1218px;top:594px">Prezzo unitario</div>
<div style="left:1218px;top:607px">Prezzo unitario</div>
<div style="left:1218px;top:620px">Totale IVA compresa</div>
<div style="left:1218px;top:633px">Codice imposta</div>
<div style="left:1218px;top:646px">Descrizione imposte</div>
<div style="left:1218px;top:659px">Percentuale imposte</div>
<div style="left:1218px;top:672px">Nome operatore</div>
<div style="left:1218px;top:685px">Dettaglio testata riparazione (sub-opzione)</div>
<div class="sel" style="left:1217px;top:697px;width:291px;padding-left:1px">Dettagli creazione/modifica</div>
</div>

<!-- dialog -->
<div style="left:1282px;top:351px;width:288px;height:313px;background:#dcdcdc;border:1px solid #33475f;border-right:none"></div>
<div class="tb" style="left:1283px;top:352px;width:287px;height:20px"></div>
<div style="left:1285px;top:355px;font-weight:bold;font-size:12px;color:#e6ebf2;letter-spacing:.2px">READY PRO</div>
<div style="left:1283px;top:372px;width:287px;height:63px;background:#fff"></div>
<svg width="44" height="44" style="left:1291px;top:380px"><use href="#q"/></svg>
<div style="left:1349px;top:376px;font-weight:bold;font-size:15.6px;line-height:18px">Selezionare il tipo di dettaglio</div>
<div class="in" style="left:1312px;top:442px;width:258px;height:164px;border-right:none"></div>
<div class="v" style="left:1316px;top:444px;font-size:11.35px">Data creazione record</div>
<div class="v" style="left:1316px;top:460px;font-size:11.35px">Ora creazione record</div>
<div class="v sel" style="left:1314px;top:476px;width:256px;height:16px;font-size:11.35px;line-height:16px;padding:0 2px">Nome operatore creazione record</div>
<div class="v" style="left:1316px;top:492px;font-size:11.35px">Nome terminale creazione record</div>
<div class="v" style="left:1316px;top:508px;font-size:11.35px">Data ultima modifica record</div>
<div class="v" style="left:1316px;top:524px;font-size:11.35px">Ora ultima modifica record</div>
<div class="v" style="left:1316px;top:540px;font-size:11.35px">Nome operatore ultima modifica record</div>
<div class="v" style="left:1316px;top:556px;font-size:11.35px">Nome terminale ultima modifica record</div>
<div class="btn" style="left:1312px;top:612px;width:112px;height:35px;padding:10px 0 0 30px">OK (F12)</div>
<svg width="24" height="24" style="left:1315px;top:617px"><use href="#ok"/></svg>
<div class="btn" style="left:1430px;top:612px;width:113px;height:35px;padding:10px 0 0 30px">Annulla (ESC)</div>
<svg width="24" height="24" style="left:1433px;top:617px"><use href="#no"/></svg>

<!-- annotations -->
<svg style="left:0;top:0" width="1570" height="768">
<defs><filter id="sh" x="-20%" y="-20%" width="140%" height="140%" color-interpolation-filters="sRGB"><feDropShadow dx="2" dy="3" stdDeviation="1.5" flood-color="#000" flood-opacity=".35"/></filter></defs>
<g filter="url(#sh)" fill="none" stroke="#f00008" stroke-width="4.5">
<rect x="489" y="501" width="128" height="46" rx="20" ry="20"/>
<rect x="681" y="466" width="42" height="33" rx="16" ry="16"/>
<rect x="1198" y="688" width="188" height="33" rx="16" ry="16"/>
<rect x="1297" y="470" width="239" height="29" rx="14" ry="14"/>
<path d="M729 495L1168 683" stroke-width="6"/>
<path d="M1361 680L1385 522" stroke-width="6"/>
<path d="M1187 692L1173 677 1165 703z" fill="#f00008" stroke="#f00008" stroke-width="1"/>
<path d="M1388 509L1376 525 1396 527z" fill="#f00008" stroke="#f00008" stroke-width="1"/>
</g>
</svg>
</body></html>
